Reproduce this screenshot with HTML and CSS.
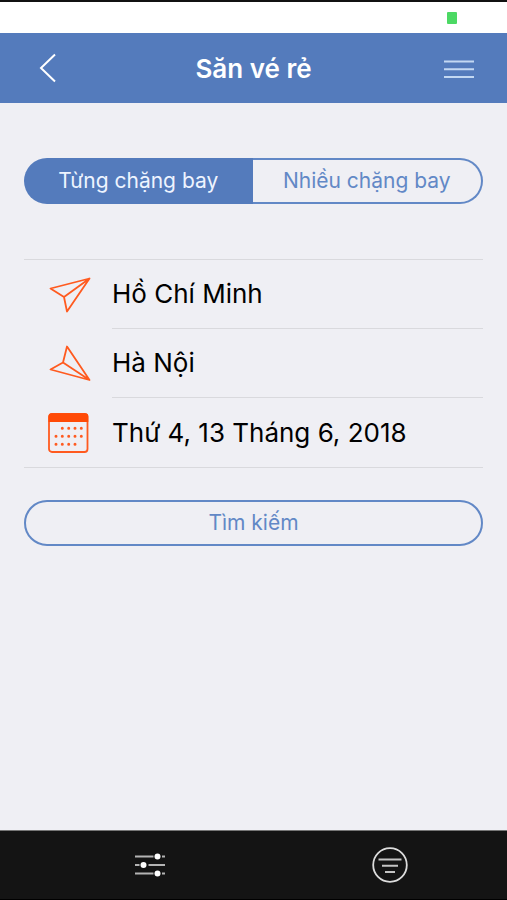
FILE: index.html
```html
<!DOCTYPE html>
<html lang="vi">
<head>
	<meta charset="utf-8">
	<meta name="viewport" content="width=device-width, initial-scale=1">
	<title>Săn vé rẻ</title>
	<link rel="stylesheet" href="styles.css">
</head>
<body>

	<div class="status-bar">
		<span class="battery"></span>
	</div>

	<header class="header">
		<button type="button" class="icon-btn" aria-label="Quay lại">
			<svg width="18" height="30" viewBox="0 0 18 30" fill="none" stroke="#fff" stroke-width="2">
				<path d="M16 1.5L2 15L16 28.5"/>
			</svg>
		</button>
		<h1>Săn vé rẻ</h1>
		<button type="button" class="icon-btn" aria-label="Menu">
			<svg width="30" height="22" viewBox="0 0 30 22" fill="none" stroke="#c3d8f2" stroke-width="2">
				<path d="M0 4.5H30M0 12.3H30M0 20H30"/>
			</svg>
		</button>
	</header>

	<main class="content">
		<div class="tabs">
			<button type="button" class="tab active">Từng chặng bay</button>
			<button type="button" class="tab">Nhiều chặng bay</button>
		</div>

		<div class="fields">
			<button type="button" class="field">
				<svg width="44" height="40" viewBox="0 0 44 40" fill="none" stroke="#ff5a1f" stroke-width="1.8" stroke-linejoin="round">
					<path d="M2.5 13.5L41.5 3.5L19 36.5L16 22ZM16 22L41.5 3.5"/>
				</svg>
				<span class="value">Hồ Chí Minh</span>
			</button>
			<button type="button" class="field">
				<svg width="44" height="40" viewBox="0 0 44 40" fill="none" stroke="#ff5a1f" stroke-width="1.8" stroke-linejoin="round">
					<path d="M19 2.5L41.500 36L2.5 25.5L15 18.5ZM15 18.5L41.500 36"/>
				</svg>
				<span class="value">Hà Nội</span>
			</button>
			<button type="button" class="field">
				<svg width="44" height="40" viewBox="0 0 44 40">
					<rect x="1" y="1" width="38.5" height="38" rx="3" fill="none" stroke="#ff5a1f" stroke-width="1.8"/>
					<path d="M0.500 9V3.5Q0.5 0.2 3.5 0.2H37Q40.300 0.2 40.300 3.5V9Z" fill="#ff4a06"/>
					<!-- days -->
					<path d="M14.3 15.2h0M20.700 15.2h0M27 15.2h0M33.300 15.2h0M8 23.2h0M14.3 23.2h0M20.700 23.2h0M27 23.2h0M33.300 23.2h0M8 31.2h0M14.3 31.2h0M20.700 31.2h0M27 31.2h0" stroke="#ff5a1f" stroke-width="3" stroke-linecap="round"/>
				</svg>
				<span class="value">Thứ 4, 13 Tháng 6, 2018</span>
			</button>
		</div>

		<button type="button" class="search-btn">Tìm kiếm</button>
	</main>

	<footer class="footer">
		<button type="button" class="icon-btn" aria-label="Tùy chỉnh">
			<svg width="30" height="26" viewBox="0 0 30 26">
				<path d="M0 4.500H18.500M27 4.500H30M0 13H4.500M13.500 13H30M0 21.500H18.500M27 21.500H30" stroke="#b4b4b4" stroke-width="2"/>
				<circle cx="22.500" cy="4.500" r="3" fill="#fff"/>
				<circle cx="8.500" cy="13" r="3" fill="#fff"/>
				<circle cx="22.500" cy="21.500" r="3" fill="#fff"/>
			</svg>
		</button>
		<button type="button" class="icon-btn" aria-label="Bộ lọc">
			<svg width="36" height="36" viewBox="0 0 36 36" fill="none">
				<circle cx="18" cy="18" r="16.8" stroke="#dcdcdc" stroke-width="1.8"/>
				<path d="M6.500 12.500H29.500M10 18.800H26M13 25H23" stroke="#c4c4c4" stroke-width="2"/>
			</svg>
		</button>
	</footer>

</body>
</html>
```
FILE: styles.css
```css
* {
  box-sizing: border-box;
}

body {
  margin: 0;
  min-height: 100vh;
  display: flex;
  flex-direction: column;
  background-color: #efeff4;
  font-family: Inter, "Liberation Sans", sans-serif;
}

button {
  font-family: inherit;
  border: none;
  background: none;
  padding: 0;
  cursor: pointer;
}

svg {
  display: block;
  flex: none;
}

/* top */
.status-bar {
  display: flex;
  justify-content: flex-end;
  align-items: center;
  height: 33px;
  padding-right: 50px;
  background-color: #fff;
  border-top: 2px solid #111;
}

.battery {
  width: 10px;
  height: 12px;
  border-radius: 1px;
  background-color: #4cd964;
}

.header {
  display: flex;
  justify-content: space-between;
  align-items: center;
  height: 70px;
  padding: 0 25px;
  background-color: #547bbc;
}

.header h1 {
  margin: 0;
  color: #fff;
  font-size: 26px;
  font-weight: 600;
}

.icon-btn {
  display: flex;
  justify-content: center;
  align-items: center;
  width: 46px;
  height: 46px;
}

/* form */
.content {
  flex: 1;
  padding: 55px 24px 32px;
}

.tabs {
  display: flex;
  height: 46px;
}

.tab {
  flex: 1;
  padding-bottom: 2px;
  border: 2px solid #6288c6;
  border-left: none;
  border-radius: 0 23px 23px 0;
  color: #6288c6;
  font-size: 21px;
}

.tab.active {
  border: none;
  border-radius: 23px 0 0 23px;
  background-color: #547bbc;
  color: #eef4ff;
}

.fields {
  margin: 55px 0 32px;
  border-top: 1px solid #d9d9dd;
  border-bottom: 1px solid #d9d9dd;
}

.field {
  display: flex;
  align-items: center;
  gap: 20px;
  width: 100%;
  height: 69px;
  padding-left: 24px;
  text-align: left;
}

.field .value {
  flex: 1;
  color: #000;
  font-size: 26px;
  line-height: 68px;
  border-bottom: 1px solid #d9d9dd;
}

.field:last-child .value {
  border-bottom: none;
}

.search-btn {
  display: block;
  width: 100%;
  height: 46px;
  padding-bottom: 2px;
  border: 2px solid #6288c6;
  border-radius: 23px;
  color: #6288c6;
  font-size: 21px;
}

/* bottom */
.footer {
  display: flex;
  justify-content: space-between;
  align-items: center;
  height: 70px;
  padding: 0 94px 0 127px;
  background-color: #141414;
  border-top: 1px solid #777;
  border-bottom: 1px solid #000;
}
```
